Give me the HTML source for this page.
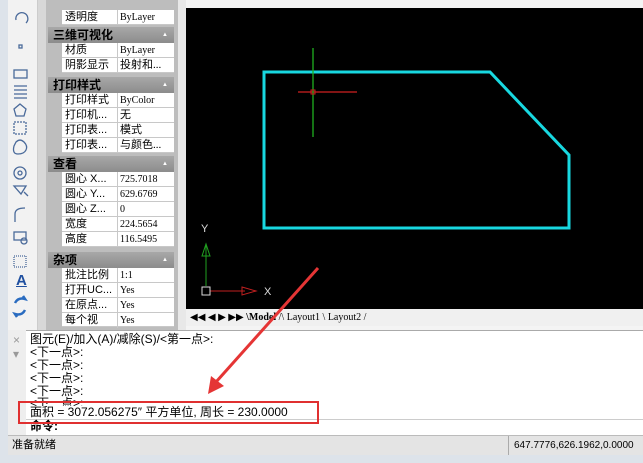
<!DOCTYPE html>
<html><head><meta charset="utf-8"><style>
*{margin:0;padding:0;box-sizing:border-box}
body{width:643px;height:463px;overflow:hidden;background:#f4f4f4;font-family:"Liberation Sans","Noto Sans CJK SC",sans-serif;position:relative}
.a{position:absolute}
.row{position:absolute;left:62px;width:112px;height:15px;font-size:11px;line-height:15px;border-bottom:1px solid #c8c8c8;background:#fff}
.row span{position:absolute;left:3px}
.row b{font-weight:normal;position:absolute;left:58px;font-family:"Liberation Serif","Noto Sans CJK SC",serif;font-size:10px}
.row i{position:absolute;left:55px;top:0;width:1px;height:15px;background:#c8c8c8}
.hd{position:absolute;left:48px;width:126px;height:16px;background:linear-gradient(#a8a8a8,#8c8c8c);color:#000;font-weight:bold;font-size:12px;line-height:16px;padding-left:5px}
.hd:after{content:"▲";position:absolute;right:6px;font-size:6px;color:#fff}
.cmd{position:absolute;left:30px;font-size:12px;line-height:13px;font-family:"Liberation Sans","Noto Sans CJK SC",sans-serif}
</style></head><body>
<div class="a" style="left:0;top:0;width:8px;height:463px;background:#dde3ea"></div>
<div class="a" style="left:8px;top:0;width:30px;height:330px;background:#f2f2f2;border-right:1px solid #ccc"></div>
<div class="a" style="left:38px;top:0;width:8px;height:330px;background:#d8d8d8"></div>
<div class="a" style="left:46px;top:0;width:132px;height:330px;background:#bdbdbd"></div>
<div class="a" style="left:178px;top:0;width:8px;height:330px;background:#e8e8e8"></div>
<svg class="a" style="left:8px;top:0" width="30" height="330" fill="none" stroke="#4a6a9a" stroke-width="1.3">
<path d="M8 20a6 6 0 1 1 10 3"/><rect x="11" y="45" width="3" height="3"/>
<rect x="6" y="70" width="13" height="8"/><path d="M6 86h13M6 90h13M6 94h13M6 98h13"/>
<path d="M12 104l6 5-2 7h-8l-2-7z"/><rect x="6" y="122" width="12" height="12" stroke-dasharray="2 1"/>
<path d="M8 142q4-4 8 0t2 8-8 4-4-8z"/><circle cx="12" cy="173" r="6"/><circle cx="12" cy="173" r="2"/>
<path d="M6 186h12l-5 8zM16 192l4 4"/><path d="M7 222v-8q0-6 10-6"/><rect x="6" y="232" width="12" height="8"/><circle cx="16" cy="241" r="3"/>
<rect x="6" y="256" width="12" height="11" stroke-dasharray="1 1"/>
<path d="M7 303q3-6 10-4l-2-3M17 310q-3 6-10 4l2 3" stroke="#2a6cc0" stroke-width="2.5"/>
</svg>
<div class="a" style="left:16px;top:272px;font-size:15px;font-weight:bold;color:#2050a0;text-decoration:underline">A</div>
<div class="row" style="top:10px"><span>透明度</span><i></i><b>ByLayer</b></div>
<div class="hd" style="top:27px">三维可视化</div>
<div class="row" style="top:43px"><span>材质</span><i></i><b>ByLayer</b></div>
<div class="row" style="top:58px"><span>阴影显示</span><i></i><b style="font-size:11px">投射和...</b></div>
<div class="hd" style="top:77px">打印样式</div>
<div class="row" style="top:93px"><span>打印样式</span><i></i><b>ByColor</b></div>
<div class="row" style="top:108px"><span>打印机...</span><i></i><b style="font-size:11px">无</b></div>
<div class="row" style="top:123px"><span>打印表...</span><i></i><b style="font-size:11px">模式</b></div>
<div class="row" style="top:138px"><span>打印表...</span><i></i><b style="font-size:11px">与颜色...</b></div>
<div class="hd" style="top:156px">查看</div>
<div class="row" style="top:172px"><span>圆心 X...</span><i></i><b>725.7018</b></div>
<div class="row" style="top:187px"><span>圆心 Y...</span><i></i><b>629.6769</b></div>
<div class="row" style="top:202px"><span>圆心 Z...</span><i></i><b>0</b></div>
<div class="row" style="top:217px"><span>宽度</span><i></i><b>224.5654</b></div>
<div class="row" style="top:232px"><span>高度</span><i></i><b>116.5495</b></div>
<div class="hd" style="top:252px">杂项</div>
<div class="row" style="top:268px"><span>批注比例</span><i></i><b>1:1</b></div>
<div class="row" style="top:283px"><span>打开UC...</span><i></i><b>Yes</b></div>
<div class="row" style="top:298px"><span>在原点...</span><i></i><b>Yes</b></div>
<div class="row" style="top:313px;height:14px"><span>每个视</span><i></i><b>Yes</b></div>
<div class="a" style="left:186px;top:8px;width:457px;height:301px;background:#000"></div>
<div class="a" style="left:186px;top:309px;width:457px;height:17px;background:#f0f0f0;font-size:10px;line-height:17px;font-family:'Liberation Serif',serif;padding-left:4px">◀◀ ◀ ▶ ▶▶ <b>\Model</b> /\ Layout1 \ Layout2 /</div>
<div class="a" style="left:8px;top:330px;width:635px;height:105px;background:#fff;border-top:1px solid #aaa"></div>
<div class="a" style="left:8px;top:330px;width:18px;height:105px;background:#eee;color:#999;font-size:12px;padding:3px 0 0 5px">×<br>▾</div>
<div class="cmd" style="top:333px">图元(E)/加入(A)/减除(S)/&lt;第一点&gt;:</div>
<div class="cmd" style="top:346px">&lt;下一点&gt;:</div>
<div class="cmd" style="top:359px">&lt;下一点&gt;:</div>
<div class="cmd" style="top:372px">&lt;下一点&gt;:</div>
<div class="cmd" style="top:385px">&lt;下一点&gt;:</div>
<div class="cmd" style="top:397px">&lt;下一点&gt;:</div>
<div class="cmd" style="top:406px;background:#fff;width:290px">面积 = 3072.056275″ 平方单位, 周长 = 230.0000</div>
<div class="a" style="left:26px;top:419px;width:617px;height:1px;background:#ccc"></div>
<div class="cmd" style="top:420px;font-weight:bold">命令:</div>
<div class="a" style="left:8px;top:435px;width:635px;height:20px;background:#e4e4e4;border-top:1px solid #bbb;font-size:11px;line-height:19px;padding-left:4px">准备就绪</div>
<div class="a" style="left:508px;top:436px;width:1px;height:19px;background:#aaa"></div>
<div class="a" style="left:514px;top:436px;font-size:10px;line-height:19px">647.7776,626.1962,0.0000</div>
<div class="a" style="left:0;top:455px;width:643px;height:8px;background:#dde3ea"></div>
<svg class="a" style="left:0;top:0" width="643" height="463" fill="none">
<path d="M264 72H490L569 155V228H264Z" stroke="#18d8e0" stroke-width="3"/>
<path d="M298 92H357" stroke="#d02020" stroke-width="1.3"/>
<path d="M313 48V137" stroke="#20b020" stroke-width="1.3"/>
<rect x="311" y="90" width="4" height="4" stroke="#d02020"/>
<path d="M206 286V246M202 256l4-12 4 12z" stroke="#20a020"/>
<path d="M210 291H245M242 287l14 4-14 4z" stroke="#c02020"/>
<rect x="202" y="287" width="8" height="8" stroke="#ddd"/>
<text x="201" y="232" fill="#ddd" font-size="11" font-family="Liberation Sans">Y</text>
<text x="264" y="295" fill="#ddd" font-size="11" font-family="Liberation Sans">X</text>
<path d="M318 268L216 382" stroke="#e53535" stroke-width="3"/>
<path d="M208 394l3-18 13 10z" fill="#e53535"/>
<rect x="19" y="402" width="299" height="21" stroke="#e03030" stroke-width="2"/>
</svg>
</body></html>
